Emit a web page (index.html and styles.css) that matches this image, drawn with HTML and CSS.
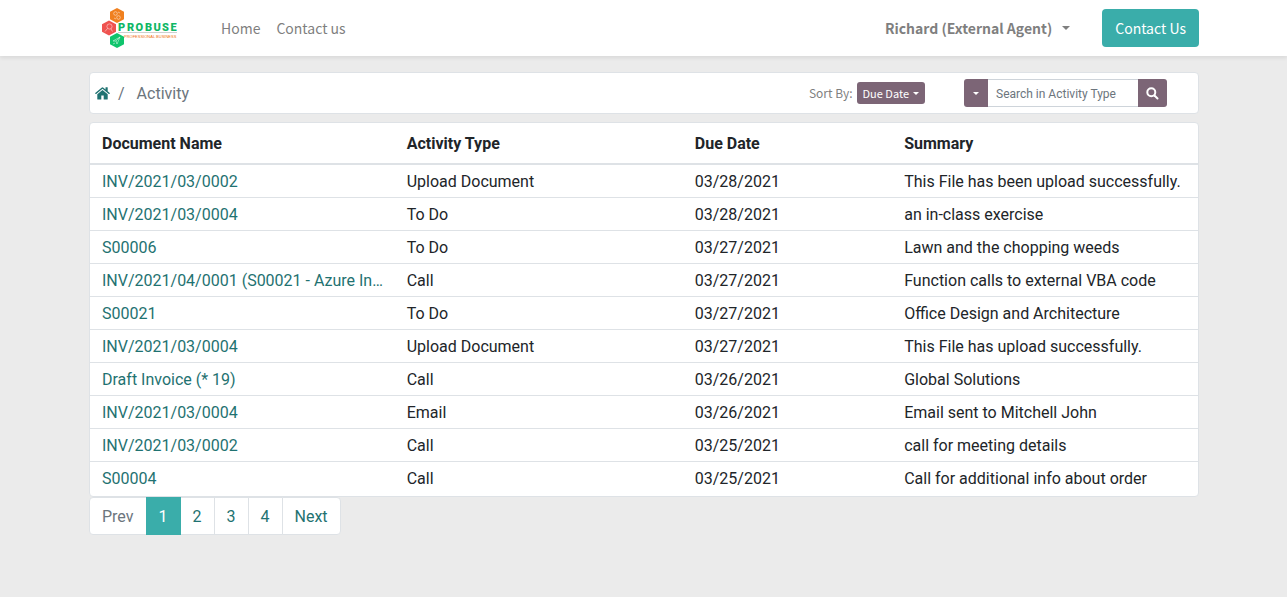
FILE: index.html
```html
<!DOCTYPE html>
<html lang="en">
<head>
<meta charset="utf-8">
<meta name="viewport" content="width=device-width, initial-scale=1">
<title>Activity</title>
<link rel="stylesheet" href="styles.css">
</head>
<body>
<header class="navbar">
  <div class="container navbar-inner">
    <a class="brand" href="#" aria-label="Probuse">
      <svg width="100" height="40" viewBox="0 0 100 40">
        <path fill="#f0801f" d="M28 0l7 3.700v7.600L28 15l-7-3.700V3.700z"/>
        <path fill="#ef5350" d="M20 12.500l7 3.700v7.600l-7 3.700-7-3.700v-7.600z"/>
        <path fill="#0fc46c" d="M28 25l7 3.700v7.600L28 40l-7-3.700v-7.600z"/>
        <g fill="none" stroke="#fff" stroke-width="0.700" stroke-opacity="0.650">
          <circle cx="26.500" cy="5.500" r="1.800"/><circle cx="29.500" cy="9.500" r="1.800"/><path d="M25 10l2 1M29 4l2 1"/>
          <circle cx="20.500" cy="18.500" r="2.600"/><path d="M18.500 20.500l-2.500 3M22 21l1.500 2.500"/>
          <path d="M24 33l7-4-3 7-1-3zM27 33l4-4M24 36l2-1"/>
        </g>
        <text class="brand-name" y="22.500" x="29 38 46.500 56 64.500 73 81.500">PROBUSE</text>
        <path stroke="#b8bcba" stroke-width="0.700" d="M29 24.500h59"/>
        <text class="brand-tag" x="35" y="30">PROFESSIONAL BUSINESS</text>
      </svg>
    </a>
    <nav class="nav-links">
      <a href="#">Home</a>
      <a href="#">Contact us</a>
    </nav>
    <button class="user-menu" type="button">Richard (External Agent)<span class="caret"></span></button>
    <a class="cta" href="#">Contact Us</a>
  </div>
</header>
<main class="container content">
  <div class="card toolbar">
    <nav class="breadcrumb" aria-label="Breadcrumb">
      <a class="home" href="#" aria-label="Home">
        <svg width="15" height="13" viewBox="0 0 15 13" fill="currentColor"><path d="M7.500 3L2.300 7.300V12q0 .5.500.5h3.500v-4h2.400v4h3.500q.5 0 .5-.5V7.300z"/><path d="M14.800 6L12.700 4.200V.6q0-.3-.3-.3h-1.600q-.3 0-.3.300v1.800L8.400.7q-.9-.7-1.800 0L.2 6q-.2.200 0 .4l.5.600q.2.200.5 0l6.300-5.200L13.800 7q.3.200.5 0l.5-.6q.2-.2 0-.4z"/></svg>
      </a>
      <span class="slash">/</span>
      <span>Activity</span>
    </nav>
    <div class="sort">
      <span id="sort-label">Sort By:</span>
      <button class="sort-button" id="sort-button" type="button" aria-labelledby="sort-label sort-button">Due Date<span class="caret"></span></button>
    </div>
    <form class="search">
      <button class="search-scope" type="button" aria-label="Search in"><span class="caret"></span></button>
      <input type="text" placeholder="Search in Activity Type" aria-label="Search in Activity Type">
      <button class="search-submit" type="button" aria-label="Search">
        <svg width="13" height="13" viewBox="0 0 13 13" fill="none" stroke="currentColor" stroke-width="2"><circle cx="5.300" cy="5.300" r="4"/><path stroke-linecap="round" d="M8.500 8.500l3 3"/></svg>
      </button>
    </form>
  </div>
  <div class="card">
    <table class="activities">
      <colgroup><col class="col-doc"><col class="col-type"><col class="col-date"><col></colgroup>
      <thead><tr><th>Document Name</th><th>Activity Type</th><th>Due Date</th><th>Summary</th></tr></thead>
      <tbody>
        <tr><td><a href="#">INV/2021/03/0002</a></td><td>Upload Document</td><td>03/28/2021</td><td>This File has been upload successfully.</td></tr>
        <tr><td><a href="#">INV/2021/03/0004</a></td><td>To Do</td><td>03/28/2021</td><td>an in-class exercise</td></tr>
        <tr><td><a href="#">S00006</a></td><td>To Do</td><td>03/27/2021</td><td>Lawn and the chopping weeds</td></tr>
        <tr><td><a href="#">INV/2021/04/0001 (S00021 - Azure In…</a></td><td>Call</td><td>03/27/2021</td><td>Function calls to external VBA code</td></tr>
        <tr><td><a href="#">S00021</a></td><td>To Do</td><td>03/27/2021</td><td>Office Design and Architecture</td></tr>
        <tr><td><a href="#">INV/2021/03/0004</a></td><td>Upload Document</td><td>03/27/2021</td><td>This File has upload successfully.</td></tr>
        <tr><td><a href="#">Draft Invoice (* 19)</a></td><td>Call</td><td>03/26/2021</td><td>Global Solutions</td></tr>
        <tr><td><a href="#">INV/2021/03/0004</a></td><td>Email</td><td>03/26/2021</td><td>Email sent to Mitchell John</td></tr>
        <tr><td><a href="#">INV/2021/03/0002</a></td><td>Call</td><td>03/25/2021</td><td>call for meeting details</td></tr>
        <tr><td><a href="#">S00004</a></td><td>Call</td><td>03/25/2021</td><td>Call for additional info about order</td></tr>
      </tbody>
    </table>
  </div>
  <nav class="pagination" aria-label="Pages">
    <a class="disabled" aria-disabled="true">Prev</a>
    <a class="active" href="#" aria-current="page">1</a>
    <a href="#">2</a>
    <a href="#">3</a>
    <a href="#">4</a>
    <a href="#">Next</a>
  </nav>
</main>
</body>
</html>
```

FILE: styles.css
```css
* { box-sizing: border-box; }
body {
  margin: 0;
  background: #ebebeb;
  color: #212529;
  font: 16px/24px Roboto, "Liberation Sans", sans-serif;
}
a { color: #1f7271; text-decoration: none; }
button, input { font: inherit; margin: 0; }
button { border: 0; cursor: pointer; }
svg { display: block; }
.container { max-width: 1139px; margin: 0 auto; padding: 0 14px 0 15px; }

.navbar {
  background: #fff;
  box-shadow: 0 2px 4px rgba(0, 0, 0, 0.08);
  font-family: "Noto Sans CJK SC", "Open Sans", sans-serif;
  font-size: 14px;
}
.navbar-inner { display: flex; align-items: center; min-height: 56px; }
.brand { margin-right: 24px; }
.brand-name { font: 900 11px Roboto, sans-serif; fill: #0fb765; }
.brand-tag { font: 4px "Liberation Sans", sans-serif; fill: #f0700f; }
.nav-links { display: flex; flex: 1; }
.nav-links a { padding: 8px; color: #7f7f7f; }
.user-menu { padding: 8px; margin-right: 24px; background: none; color: #7f7f7f; font-weight: 700; }
.caret {
  display: inline-block;
  margin-left: 10px;
  vertical-align: 4px;
  border-top: 4px solid;
  border-left: 4px solid transparent;
  border-right: 4px solid transparent;
}
.cta { padding: 7px 13px; border-radius: 4px; background: #3aadaa; color: #fff; }

.content { padding-top: 16px; }
.card { background: #fff; border: 1px solid #dee2e6; border-radius: 4px; }
.toolbar { display: flex; align-items: center; min-height: 42px; margin-bottom: 8px; padding: 0 31px 0 5px; }
.breadcrumb { display: flex; align-items: center; flex: 1; padding-top: 2px; color: #6c757d; }
.home { padding-bottom: 2px; }
.slash { padding: 0 12px 0 8px; }
.sort {
  display: flex;
  align-items: center;
  gap: 4px;
  margin-right: 39px;
  color: #7f7f7f;
  font: 12px/18px "Noto Sans CJK SC", "Open Sans", sans-serif;
}
.sort-button { padding: 2px 6px; border-radius: 3px; background: #7c6576; color: #fff; font-size: 11px; }
.sort-button .caret { margin-left: 4px; }
.sort-button .caret, .search .caret { border-width: 3px; border-bottom: 0; vertical-align: 3px; }
.search { display: flex; height: 28px; color: #fff; font-size: 12px; line-height: 18px; }
.search button { display: flex; align-items: center; justify-content: center; padding: 0; background: #7c6576; color: #fff; }
.search .caret { margin: 0; }
.search-scope { width: 24px; border-radius: 3px 0 0 3px; }
.search-submit { width: 29px; border-radius: 0 3px 3px 0; }
.search input { width: 150px; padding: 1px 8px 0; border: solid #ced4da; border-width: 1px 0; background: #fff; color: #495057; }
.search input::placeholder { color: #6c757d; opacity: 1; }

.activities { width: 100%; table-layout: fixed; border-collapse: separate; border-spacing: 0; }
.col-doc { width: 27.5%; }
.col-type { width: 26%; }
.col-date { width: 18.9%; }
.activities th { padding: 9px 12px 7px; border-bottom: 2px solid #dee2e6; text-align: left; font-weight: 700; }
.activities td { padding: 5px 12px 3px; border-bottom: 1px solid #dee2e6; white-space: nowrap; }
.activities tr:last-child td { padding-bottom: 5px; border-bottom: 0; }

.pagination { display: flex; }
.pagination a { padding: 7px 12px 5px; margin-left: -1px; border: 1px solid #dee2e6; background: #fff; }
.pagination a:first-child { margin-left: 0; border-radius: 4px 0 0 4px; }
.pagination a:last-child { border-radius: 0 4px 4px 0; }
.pagination .disabled { color: #6c757d; }
.pagination .active { position: relative; border-color: #3aadaa; background: #3aadaa; color: #fff; }
```
